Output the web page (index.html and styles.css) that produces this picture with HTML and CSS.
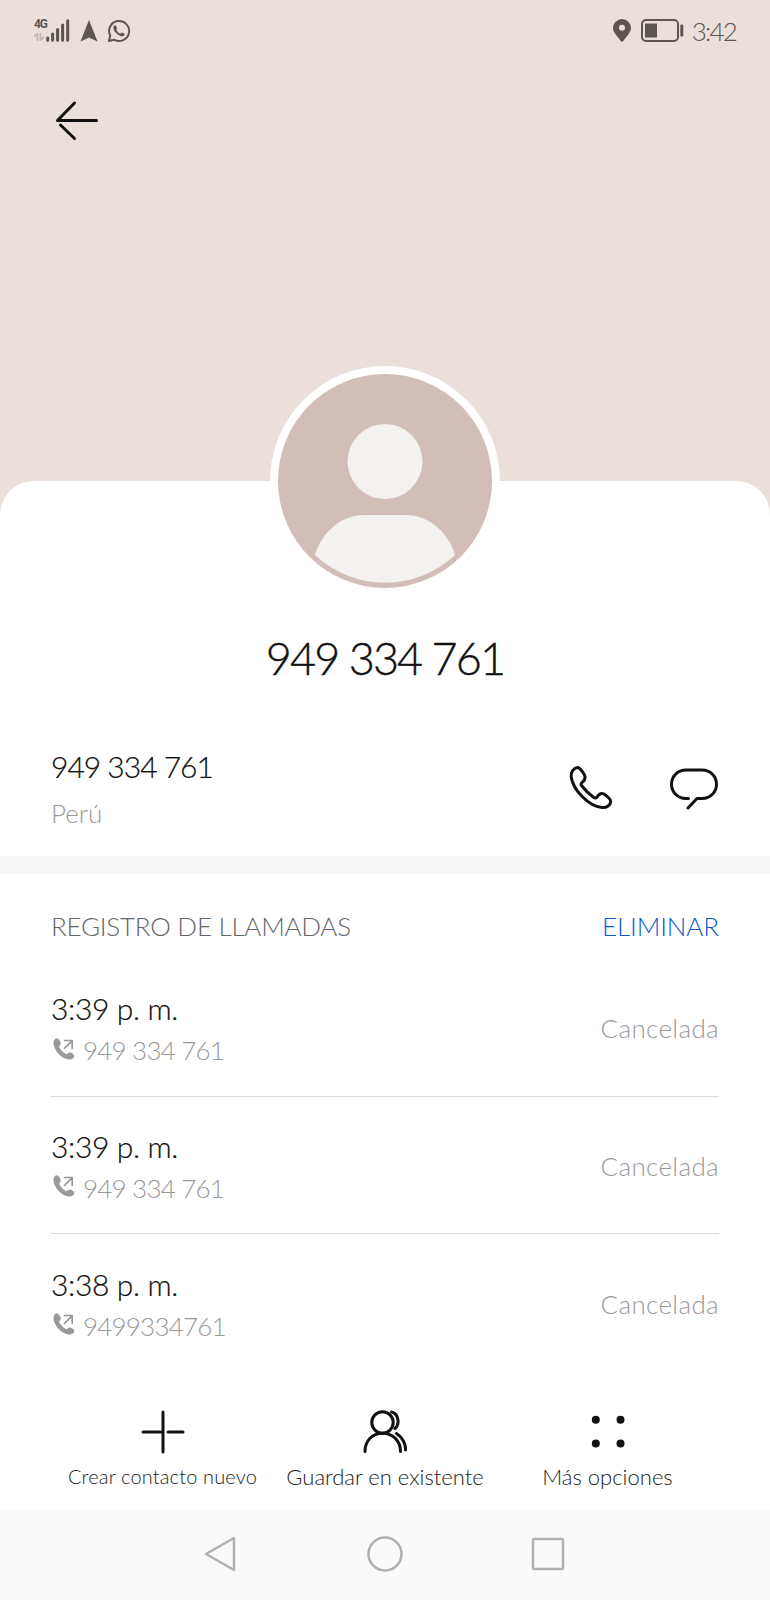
FILE: index.html
```html
<!DOCTYPE html>
<html lang="es">
<head>
    <meta charset="UTF-8">
    <meta name="viewport" content="width=device-width, initial-scale=1.0">
    <title>949 334 761</title>
    <link rel="stylesheet" href="styles.css">
</head>
<body>

    <header class="cover">
        <div class="status-bar">
            <div class="status-left">
                <div class="network">
                    <span class="network-type">4G</span>
                    <svg class="network-data" width="10" height="8" viewBox="0 0 10 8">
                        <path d="M0.500 3L3.500 1V8M6.500 0V7L9.500 4.500"/>
                    </svg>
                </div>
                <svg class="signal" width="24" height="23" viewBox="0 0 24 23">
                    <path d="M1.700 19V21.300M6.600 15V21.300M11.600 10.500V21.300M16.600 6V21.300M21.700 1.700V21.300"/>
                </svg>
                <svg class="nav-arrow" width="18" height="22" viewBox="0 0 18 22">
                    <path d="M9 0L17.500 21.500L9 17.500L0.500 21.500Z"/>
                </svg>
                <svg class="whatsapp" width="24" height="24" viewBox="0 0 24 24">
                    <path class="bubble" d="M2 22L3.200 16.500A10 10 0 1 1 7.200 20.700Z"/>
                    <path class="handset" d="M8.600 6.300C8 5.800 6.700 6.500 6.400 8.300C6 12 11.500 17.500 15 17.300C17 17 18 15.800 17.600 14.900L15.200 13.600C14.600 13.400 14 14.500 13.500 14.700C12 14.300 9.800 12.200 9.300 10.700C9.500 10.100 10.200 9.600 10 9Z"/>
                </svg>
            </div>
            <div class="status-right">
                <svg class="pin" width="18" height="23" viewBox="0 0 18 23">
                    <path fill-rule="evenodd" d="M9 0A9 9 0 0 0 0 9C0 14 5 17.500 7.500 21.800Q9 23.500 10.500 21.800C13 17.500 18 14 18 9A9 9 0 0 0 9 0ZM9 5.800A3 3 0 1 1 9 11.800A3 3 0 1 1 9 5.800Z"/>
                </svg>
                <svg class="battery" width="43" height="23" viewBox="0 0 43 23">
                    <rect class="shell" x="1" y="1" width="36" height="21" rx="4"/>
                    <rect x="4" y="4.500" width="12" height="14"/>
                    <rect x="39.300" y="5.500" width="3" height="12" rx="1"/>
                </svg>
                <span class="clock">3:42</span>
            </div>
        </div>
        <svg class="back" width="44" height="42" viewBox="0 0 44 42">
            <path d="M41.500 20.500H2.500L19.500 3M5.500 25L19.500 38.500"/>
        </svg>
    </header>

    <main class="card">
        <svg class="avatar" width="230" height="230" viewBox="0 0 230 230">
            <circle cx="115" cy="115" r="115" fill="#fff"/>
            <circle cx="115" cy="115" r="107" fill="#d2beb8"/>
            <circle cx="115" cy="95.500" r="37.500" fill="#f4f1f1"/>
            <path d="M45 189C51 168 70 149 94 149H136C160 149 179 168 185 189A102 102 0 0 1 45 189Z" fill="#f4f1f1"/>
        </svg>

        <h1>949 334 761</h1>

        <section class="contact">
            <div>
                <div class="number">949 334 761</div>
                <div class="country">Perú</div>
            </div>
            <div class="contact-actions">
                <svg width="44" height="44" viewBox="0 0 44 44">
                    <path d="M8.500 1.500C4.500 2 1.500 6 2.200 11C4 24 20 40.500 33 41.500C38 41.800 41.500 39 41.800 35.500C42 33.500 37.500 29.500 35 28C32 26.500 29.500 28.500 28 31C27.500 32 26 32.300 24.500 31.300C20 28 16 24 12.500 19.500C11.800 18.500 12 17.500 13 16.500C15 15 16.500 13 16 10.500C15.500 8 11 1.500 8.500 1.500Z"/>
                </svg>
                <svg width="48" height="44" viewBox="0 0 48 44">
                    <path d="M18.500 32.500H16C7.500 32.500 1.500 26 1.500 18.200C1.500 10.500 7.500 4 16 4H32C40.500 4 46.500 10.500 46.500 18.200C46.500 26 40.500 32.500 32 32.500H27L18 42"/>
                </svg>
            </div>
        </section>

        <section class="log">
            <div class="log-head">
                <h2>REGISTRO DE LLAMADAS</h2>
                <a class="delete">ELIMINAR</a>
            </div>
            <ul id="callList">
                <!-- Call rows are added by the script -->
            </ul>
        </section>
    </main>

    <nav class="toolbar">
        <div class="tool tool-new">
            <svg width="44" height="44" viewBox="0 0 44 44">
                <path d="M22 2V42M2 22H19.500M27 22H42"/>
            </svg>
            <span>Crear contacto nuevo</span>
        </div>
        <div class="tool">
            <svg width="44" height="44" viewBox="0 0 44 44">
                <circle cx="19.500" cy="12.500" r="10.700"/>
                <path d="M2 41.500C2 31 9 23.200 19.500 23.200S37.500 31 37.500 41.500"/>
                <path d="M28.500 2C36.500 4 36.500 15 32 18.500M33.500 23.500C39 27 43 34 42.500 40"/>
            </svg>
            <span>Guardar en existente</span>
        </div>
        <div class="tool">
            <svg width="44" height="44" viewBox="0 0 44 44">
                <g class="dots">
                    <circle cx="9.800" cy="9.800" r="4"/>
                    <circle cx="34.500" cy="9.800" r="4"/>
                    <circle cx="9.800" cy="33.400" r="4"/>
                    <circle cx="34.500" cy="33.400" r="4"/>
                </g>
            </svg>
            <span>Más opciones</span>
        </div>
    </nav>

    <footer class="system-nav">
        <svg width="36" height="36" viewBox="0 0 36 36"><path d="M30 2V34L2 18Z"/></svg>
        <svg width="36" height="36" viewBox="0 0 36 36"><circle cx="18" cy="18" r="16.500"/></svg>
        <svg width="36" height="36" viewBox="0 0 36 36"><rect x="3" y="3" width="30" height="30" rx="1"/></svg>
    </footer>

    <script>
        const calls = [
            { time: '3:39 p. m.', number: '949 334 761', status: 'Cancelada' },
            { time: '3:39 p. m.', number: '949 334 761', status: 'Cancelada' },
            { time: '3:38 p. m.', number: '9499334761', status: 'Cancelada' },
        ];

        function renderCalls() {
            const callList = document.getElementById('callList');
            calls.forEach(call => {
                const row = document.createElement('li');
                row.className = 'call';
                row.innerHTML = `
                    <div>
                        <div class="time">${call.time}</div>
                        <div class="caller">
                            <svg width="22" height="22" viewBox="0 0 22 22">
                                <path class="handset" d="M3.500 0.300C1 1 0 4 0.700 7C2 13.500 8.500 20.500 15.500 21.500C18.500 21.800 20.800 20.700 21.300 18.300C21.300 16.500 18.500 14.500 17 14.500C15.500 14.500 14.500 16 13.500 16.200C11 15.500 6.800 11 6.200 9C6 8 7.800 7.200 7.800 5.500C7.800 3.800 5.200 0 3.500 0.300Z"/>
                                <path class="arrow" d="M11.500 10.300L19 2.800M11.500 2.500H19.200V10.300"/>
                            </svg>
                            <span>${call.number}</span>
                        </div>
                    </div>
                    <div class="status">${call.status}</div>
                `;
                callList.appendChild(row);
            });
        }

        // Initial render
        renderCalls();
    </script>
</body>
</html>
```
FILE: styles.css
```css
* {
    box-sizing: border-box;
}

body {
    font-family: Lato, "Liberation Sans", sans-serif;
    font-weight: 300;
    margin: 0;
    width: 770px;
    height: 1600px;
    display: flex;
    flex-direction: column;
    background-color: #eadfda;
    color: #111;
    overflow: hidden;
}

svg {
    display: block;
    flex: none;
    fill: none;
    stroke: #111;
    stroke-width: 3;
    stroke-linecap: round;
    stroke-linejoin: round;
}

h1, h2, ul {
    margin: 0;
    padding: 0;
    font-weight: 300;
}

/* Header */
.cover {
    height: 481px;
    flex: none;
}

.status-bar {
    display: flex;
    justify-content: space-between;
    height: 60px;
    padding: 19px 34px 0 34px;
}

.status-left, .status-right {
    display: flex;
    align-items: flex-start;
}

.status-bar svg {
    fill: #5d5552;
    stroke: none;
}

.network {
    width: 12px;
}

.network-type {
    display: block;
    font-family: "Roboto", sans-serif;
    font-size: 12px;
    font-weight: 700;
    line-height: 11px;
    letter-spacing: -1.2px;
    color: #5d5552;
    white-space: nowrap;
}

.status-bar .network-data {
    margin-top: 3px;
    fill: none;
    stroke: #c3b9b5;
    stroke-width: 2;
}

.status-bar .signal {
    fill: none;
    stroke: #5d5552;
}

.nav-arrow {
    margin: 1px 0 0 9.5px;
}

.whatsapp {
    margin-left: 9px;
}

.status-bar .bubble, .status-bar .shell {
    fill: none;
    stroke: #5d5552;
    stroke-width: 2;
}

.battery {
    margin-left: 10px;
}

.clock {
    margin-left: 8px;
    font-size: 26px;
    line-height: 24px;
    letter-spacing: -1.8px;
    color: #5d5552;
}

.back {
    margin: 40px 0 0 55px;
}

/* Contact card */
.card {
    flex: none;
    height: 908px;
    background-color: #fff;
    border-radius: 34px 34px 0 0;
}

.avatar {
    margin: -115px auto 0;
    stroke: none;
}

h1 {
    padding-top: 32px;
    height: 92px;
    font-size: 45px;
    line-height: 60px;
    letter-spacing: -1.9px;
    text-align: center;
    color: #111;
    -webkit-text-stroke: 0.4px #111;
}

.contact {
    display: flex;
    justify-content: space-between;
    height: 168px;
    padding: 58px 52px 0 51px;
}

.number {
    font-size: 30px;
    line-height: 40px;
    letter-spacing: -1px;
    -webkit-text-stroke: 0.2px #111;
}

.country {
    margin-top: 9px;
    font-size: 26px;
    line-height: 36px;
    color: #999;
}

.contact-actions {
    display: flex;
    gap: 57px;
    padding-top: 20px;
}

/* Call log */
.log {
    border-top: 18px solid #f7f7f7;
    padding: 32px 51px 0;
}

.log-head {
    display: flex;
    justify-content: space-between;
    height: 53px;
    font-size: 26px;
    line-height: 40px;
}

h2 {
    font-size: 26px;
    letter-spacing: -0.25px;
    color: #666;
}

.delete {
    letter-spacing: -0.1px;
    color: #0a59d0;
}

.call {
    display: flex;
    justify-content: space-between;
    align-items: center;
    height: 137.5px;
    border-bottom: 1px solid #dcdcdc;
}

.call:last-child {
    border-bottom: none;
}

.time {
    padding-top: 2px;
    font-size: 30px;
    line-height: 40px;
    letter-spacing: -0.35px;
    -webkit-text-stroke: 0.2px #111;
}

.caller {
    display: flex;
    align-items: center;
    gap: 8px;
    margin-top: 4px;
    font-size: 26px;
    line-height: 36px;
    letter-spacing: -0.8px;
    color: #999;
}

.caller svg {
    margin: -3px 0 0 2px;
    stroke: #999;
    stroke-width: 1.7;
}

.caller .handset {
    fill: #999;
    stroke: none;
}

.status {
    padding-top: 2px;
    font-size: 26px;
    letter-spacing: 0.35px;
    color: #999;
}

/* Bottom toolbar */
.toolbar {
    display: grid;
    grid-template-columns: repeat(3, 222.5px);
    justify-content: center;
    height: 120px;
    padding-top: 21px;
    background-color: #fff;
}

.tool {
    display: flex;
    flex-direction: column;
    align-items: center;
    font-size: 22px;
    line-height: 28px;
    color: #222;
}

.tool span {
    margin-top: 9px;
    white-space: nowrap;
}

.tool-new span {
    margin-top: 8px;
    font-size: 20px;
    letter-spacing: 0.15px;
}

.tool .dots {
    fill: #111;
    stroke: none;
}

/* System navigation */
.system-nav {
    display: flex;
    justify-content: center;
    gap: 127px;
    height: 91px;
    padding-top: 27px;
    background-color: #fafafa;
}

.system-nav svg {
    stroke: #b0b0b0;
    stroke-width: 2.5;
}
```
